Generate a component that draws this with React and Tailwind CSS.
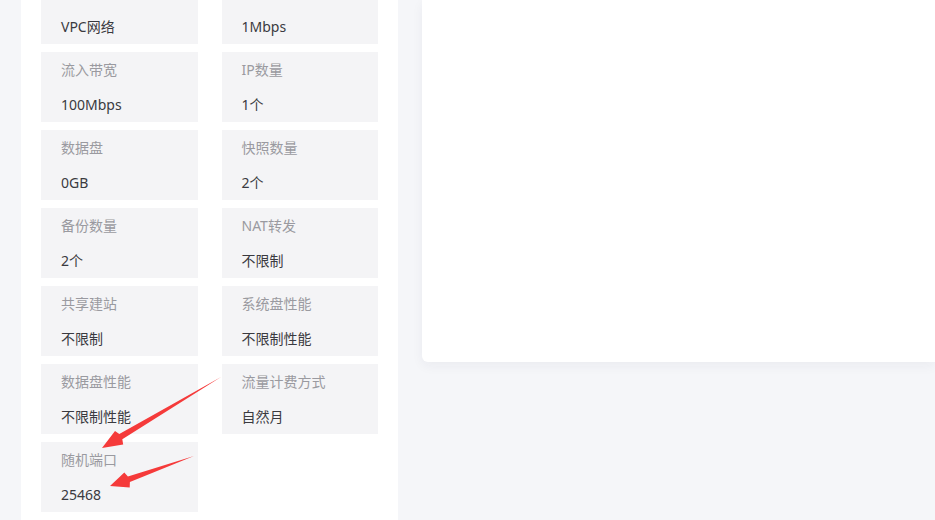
import React from "react";

const items = [
  ["", "VPC网络"],
  ["", "1Mbps"],
  ["流入带宽", "100Mbps"],
  ["IP数量", "1个"],
  ["数据盘", "0GB"],
  ["快照数量", "2个"],
  ["备份数量", "2个"],
  ["NAT转发", "不限制"],
  ["共享建站", "不限制"],
  ["系统盘性能", "不限制性能"],
  ["数据盘性能", "不限制性能"],
  ["流量计费方式", "自然月"],
  ["随机端口", "25468"],
];

export default function App() {
  return (
    <div
      className="relative h-[520px] w-[935px] overflow-hidden bg-[#f5f6f9] pl-[21px] flex gap-6"
      style={{ fontFamily: '"Noto Sans", "Noto Sans CJK SC", sans-serif' }}
    >
      <div className="w-[377px] shrink-0 bg-white px-5 h-[560px]">
        <div className="-mt-[26px] grid grid-cols-2 gap-x-6 gap-y-2">
          {items.map(([label, value], i) => (
            <div
              key={i}
              className="bg-[#f4f4f6] h-[70px] px-5 pt-[7px] pb-[6px] flex flex-col gap-[13px]"
            >
              <div className="text-[14px] leading-[22px] h-[22px] text-[#9a9aa0]">{label}</div>
              <div className="text-[14px] leading-[22px] text-[#3a3a40]">{value}</div>
            </div>
          ))}
        </div>
      </div>
      <div className="flex-1 h-[362px] bg-white rounded-bl-[6px] shadow-[0_4px_12px_rgba(30,40,80,0.05)]" />
      <svg
        className="absolute inset-0 pointer-events-none"
        width="935"
        height="520"
        viewBox="0 0 935 520"
      >
        <polygon
          fill="#f53a3a"
          points="102,448 115,431 119.3,434.1 221,377 122.3,439.3 123.2,444.5"
        />
        <polygon
          fill="#f53a3a"
          points="110,486 124.3,472.5 127.9,476.5 194,456 129.9,482.1 129.7,487.5"
        />
      </svg>
    </div>
  );
}
